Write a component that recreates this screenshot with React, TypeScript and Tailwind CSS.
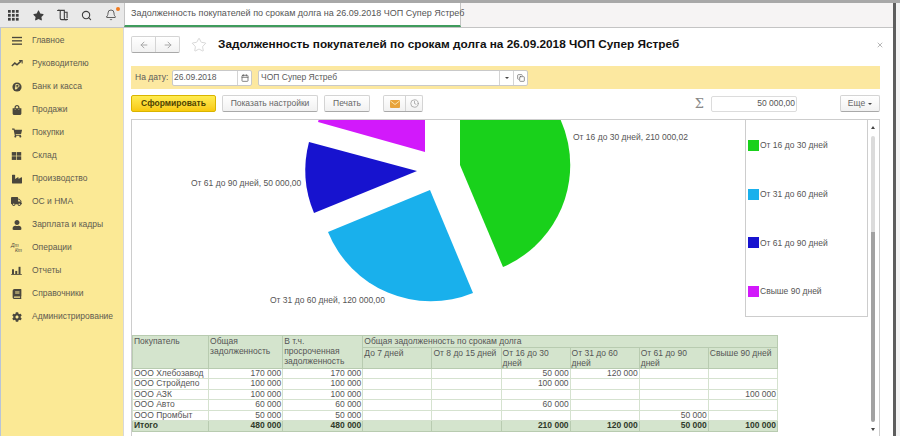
import { ArrowLeft, ArrowRight, Bell, Calendar, Clock, Copy, Search, Star, X } from 'lucide-react';
import { FaBook, FaCog, FaIndustry, FaShoppingBag, FaShoppingCart, FaTruck, FaUser, FaStar } from 'react-icons/fa';
import type { ReactNode } from 'react';

const TITLE = 'Задолженность покупателей по срокам долга на 26.09.2018 ЧОП Супер Ястреб';

const menu: Array<{ label: string; icon: ReactNode }> = [
  {
    label: 'Главное',
    icon: (
      <svg width="12" height="10" viewBox="0 0 14 12" fill="#4a473d">
        <rect x="1" y="1" width="12" height="1.6" />
        <rect x="1" y="5" width="12" height="1.6" />
        <rect x="1" y="9" width="12" height="1.6" />
      </svg>
    ),
  },
  {
    label: 'Руководителю',
    icon: (
      <svg width="12" height="9" viewBox="0 0 14 10" fill="none" stroke="#4a473d" strokeWidth="1.8">
        <path d="M1 8 L4.5 4.5 L7 6.5 L12 2" />
        <path d="M9.5 1.5 H13 V5" strokeWidth="1.2" />
      </svg>
    ),
  },
  {
    label: 'Банк и касса',
    icon: (
      <svg width="10" height="10" viewBox="0 0 12 12">
        <circle cx="6" cy="6" r="5.5" fill="#4a473d" />
        <path d="M4.6 9.2 V3 H6.8 A1.6 1.6 0 0 1 6.8 6.3 H3.5 M3.5 7.8 H6.5" fill="none" stroke="#fbe995" strokeWidth="1.1" />
      </svg>
    ),
  },
  { label: 'Продажи', icon: <FaShoppingBag size={10} color="#4a473d" /> },
  { label: 'Покупки', icon: <FaShoppingCart size={10} color="#4a473d" /> },
  {
    label: 'Склад',
    icon: (
      <svg width="11" height="10" viewBox="0 0 14 12" fill="#4a473d">
        <rect x="1" y="1" width="5.6" height="4.6" />
        <rect x="7.4" y="1" width="5.6" height="4.6" />
        <rect x="1" y="6.4" width="5.6" height="4.6" />
        <rect x="7.4" y="6.4" width="5.6" height="4.6" />
      </svg>
    ),
  },
  { label: 'Производство', icon: <FaIndustry size={10} color="#4a473d" /> },
  { label: 'ОС и НМА', icon: <FaTruck size={11} color="#4a473d" /> },
  { label: 'Зарплата и кадры', icon: <FaUser size={10} color="#4a473d" /> },
  {
    label: 'Операции',
    icon: (
      <span className="relative block h-[10px] w-[11px] text-[5px] italic leading-none text-[#4a473d]">
        <span className="absolute left-0 top-0">Дт</span>
        <span className="absolute bottom-0 right-0">Кт</span>
      </span>
    ),
  },
  {
    label: 'Отчеты',
    icon: (
      <svg width="11" height="9" viewBox="0 0 13 11" fill="#4a473d">
        <rect x="1" y="4" width="2.4" height="6" />
        <rect x="5" y="6" width="2.4" height="4" />
        <rect x="9" y="1" width="2.4" height="9" />
        <rect x="0" y="10" width="13" height="1" />
      </svg>
    ),
  },
  { label: 'Справочники', icon: <FaBook size={10} color="#4a473d" /> },
  { label: 'Администрирование', icon: <FaCog size={10} color="#4a473d" /> },
];

const legend = [
  { label: 'От 16 до 30 дней', color: 'bg-[#19d11b]' },
  { label: 'От 31 до 60 дней', color: 'bg-[#19b0ec]' },
  { label: 'От 61 до 90 дней', color: 'bg-[#1713cf]' },
  { label: 'Свыше 90 дней', color: 'bg-[#d219fb]' },
];

const rows = [
  ['ООО Хлебозавод', '170 000', '170 000', '', '', '50 000', '120 000', '', ''],
  ['ООО Стройдепо', '100 000', '100 000', '', '', '100 000', '', '', ''],
  ['ООО АЗК', '100 000', '100 000', '', '', '', '', '', '100 000'],
  ['ООО Авто', '60 000', '60 000', '', '', '60 000', '', '', ''],
  ['ООО Промбыт', '50 000', '50 000', '', '', '', '', '50 000', ''],
];

const totals = ['Итого', '480 000', '480 000', '', '', '210 000', '120 000', '50 000', '100 000'];
const subHeaders = ['До 7 дней', 'От 8 до 15 дней', 'От 16 до 30 дней', 'От 31 до 60 дней', 'От 61 до 90 дней', 'Свыше 90 дней'];
const colWidths = ['w-[76px]', 'w-[74px]', 'w-[80px]', 'w-[69px]', 'w-[69px]', 'w-[69px]', 'w-[69px]', 'w-[69px]', 'w-[69px]'];

function Btn({ children, className = '' }: { children: ReactNode; className?: string }) {
  return (
    <button className={`flex h-[17px] items-center justify-center rounded-[2px] border border-[#d4d4d4] border-b-[#a9a9a9] bg-gradient-to-b from-white to-[#f1f1f1] text-[8.5px] text-[#666] ${className}`}>
      {children}
    </button>
  );
}

function Caret() {
  return <span className="h-0 w-0 border-x-[2px] border-t-[2px] border-x-transparent border-t-[#444]" />;
}

function Report() {
  return (
    <table className="w-[646px] table-fixed border-collapse text-[8.5px] leading-[10px] text-[#555]">
      <colgroup>
        {colWidths.map((w, i) => (
          <col key={i} className={w} />
        ))}
      </colgroup>
      <thead className="bg-[#d4e4cd]">
        <tr className="h-[12px]">
          <th rowSpan={2} className="border border-[#b8cbb0] px-[1px] text-left align-top font-normal">Покупатель</th>
          <th rowSpan={2} className="border border-[#b8cbb0] px-[1px] text-left align-top font-normal">Общая задолженность</th>
          <th rowSpan={2} className="border border-[#b8cbb0] px-[1px] text-left align-top font-normal">В т.ч. просроченная задолженность</th>
          <th colSpan={6} className="border border-[#b8cbb0] px-[1px] text-left align-top font-normal">Общая задолженность по срокам долга</th>
        </tr>
        <tr className="h-[21px]">
          {subHeaders.map((h) => (
            <th key={h} className="border border-[#b8cbb0] px-[1px] text-left align-top font-normal">{h}</th>
          ))}
        </tr>
      </thead>
      <tbody className="leading-[9.4px]">
        {rows.map((row) => (
          <tr key={row[0]} className="h-[10.4px]">
            {row.map((cell, i) => (
              <td key={i} className={`whitespace-nowrap border border-[#d5e2cf] px-[1px] ${i === 0 ? 'text-left' : 'text-right'}`}>{cell}</td>
            ))}
          </tr>
        ))}
        <tr className="h-[11px] bg-[#d4e4cd] font-bold text-[#2f3a2a]">
          {totals.map((cell, i) => (
            <td key={i} className={`whitespace-nowrap border border-[#b8cbb0] px-[1px] ${i === 0 ? 'text-left' : 'text-right'}`}>{cell}</td>
          ))}
        </tr>
      </tbody>
    </table>
  );
}

export default function App() {
  return (
    <div className="flex h-[436px] w-[900px] flex-col overflow-hidden bg-white font-['Liberation_Sans',Arial,sans-serif]">
      <div className="h-[3px] shrink-0 bg-[#a8a8a8]" />
      <div className="flex min-h-0 flex-1">
        <div className="flex w-[893px] flex-col">
          <header className="flex h-[25px] shrink-0 border-b border-[#c4c4c4] bg-[#f6f4f4]">
            <div className="flex w-[124px] items-center bg-[#e9e9e9] pl-[8px] text-[#3e3e3e]">
              <svg width="11" height="11" viewBox="0 0 12 12" fill="#3e3e3e" className="mr-[14px]">
                {[0, 4.3, 8.6].flatMap((y) =>
                  [0, 4.3, 8.6].map((x) => <rect key={`${x}-${y}`} x={x} y={y} width="3" height="3" />),
                )}
              </svg>
              <FaStar size={11} className="mr-[13px]" />
              <svg width="11" height="12" viewBox="0 0 12 13" fill="none" stroke="#3e3e3e" strokeWidth="1.2" className="mr-[13px]">
                <path d="M1 1.5 H8 V10 A2 2 0 0 0 11 11.5 H5 A1.5 1.5 0 0 1 3.5 10 V3 A1.5 1.5 0 0 0 1 1.5 Z" />
                <path d="M8 3.5 H11 V10" />
              </svg>
              <Search size={11} strokeWidth={2.4} className="mr-[13px]" />
              <span className="relative">
                <Bell size={12} strokeWidth={1.6} />
                <span className="absolute right-[-3px] top-[-2px] h-[4px] w-[4px] rounded-full bg-[#f07a1e]" />
              </span>
            </div>
            <div className="flex w-[337px] items-center justify-between border-x border-[#c4c4c4] border-b-2 border-b-[#3f9c5d] bg-white pl-[6px] pr-[4px] text-[9px] text-[#555]">
              <span className="whitespace-nowrap">{TITLE}</span>
              <X size={8} strokeWidth={2.6} className="text-[#333]" />
            </div>
          </header>

          <div className="flex min-h-0 flex-1">
            <nav className="flex w-[124px] shrink-0 flex-col border-l border-l-[#b8c4d8] border-r border-r-[#d8d8d8] bg-[#fbe995] pt-[1px]">
              {menu.map((item) => (
                <div key={item.label} className="flex h-[23px] shrink-0 items-center text-[8.5px] text-[#5e5b50]">
                  <span className="flex w-[31px] shrink-0 justify-center">{item.icon}</span>
                  <span className="whitespace-nowrap">{item.label}</span>
                </div>
              ))}
            </nav>

            <main className="flex min-w-0 flex-1 flex-col pl-[7px] pr-[13px] pt-[8px]">
              <div className="flex h-[17px] shrink-0 items-center">
                <div className="flex h-[17px] w-[49px] rounded-[2px] border border-[#d4d4d4] border-b-[#a9a9a9] bg-gradient-to-b from-white to-[#f1f1f1] text-[#a8a8a8]">
                  <span className="flex flex-1 items-center justify-center border-r border-[#d4d4d4]"><ArrowLeft size={10} strokeWidth={2.4} /></span>
                  <span className="flex flex-1 items-center justify-center"><ArrowRight size={10} strokeWidth={2.4} /></span>
                </div>
                <Star size={16} strokeWidth={1} className="ml-[11px] text-[#c4c4c4]" />
                <h1 className="ml-[11px] whitespace-nowrap text-[11.8px] font-bold text-[#111]">{TITLE}</h1>
                <X size={8} strokeWidth={1.6} className="ml-auto mr-[-4px] text-[#777]" />
              </div>

              <div className="mt-[13px] flex h-[23px] shrink-0 items-center bg-[#fce8a0] pl-[4px] text-[8.5px] text-[#5a5a5a]">
                <span className="w-[37px] whitespace-nowrap">На дату:</span>
                <div className="flex h-[16px] w-[80px] items-center rounded-[2px] border border-[#c9c9c9] bg-white">
                  <span className="flex-1 pl-[1px]">26.09.2018</span>
                  <span className="flex h-full w-[14px] items-center justify-center border-l border-[#d4d4d4]"><Calendar size={8} strokeWidth={2.2} /></span>
                </div>
                <div className="ml-[6px] flex h-[16px] w-[270px] items-center rounded-[2px] border border-[#c9c9c9] bg-white">
                  <span className="flex-1 pl-[2px]">ЧОП Супер Ястреб</span>
                  <span className="flex h-full w-[14px] items-center justify-center border-l border-[#d4d4d4]"><Caret /></span>
                  <span className="flex h-full w-[14px] items-center justify-center border-l border-[#d4d4d4]"><Copy size={8} /></span>
                </div>
              </div>

              <div className="mt-[6px] flex h-[17px] shrink-0 items-center">
                <button className="flex h-[17px] w-[85px] items-center justify-center rounded-[2px] border border-[#d9b400] bg-gradient-to-b from-[#ffec4f] to-[#f8c90a] text-[8.5px] font-bold text-[#4f4300]">Сформировать</button>
                <Btn className="ml-[6px] w-[96px]">Показать настройки</Btn>
                <Btn className="ml-[6px] w-[46px]">Печать</Btn>
                <div className="ml-[13px] flex h-[17px] w-[40px] rounded-[2px] border border-[#d4d4d4] border-b-[#a9a9a9] bg-gradient-to-b from-white to-[#f1f1f1]">
                  <span className="flex w-[22px] items-center justify-center border-r border-[#d4d4d4]">
                    <svg width="10" height="8" viewBox="0 0 10 8">
                      <rect width="10" height="8" rx="1" fill="#e8a33a" />
                      <path d="M0.5 1 L5 4.5 L9.5 1" fill="none" stroke="#fbe2a8" />
                    </svg>
                  </span>
                  <span className="flex flex-1 items-center justify-center text-[#999]"><Clock size={9} /></span>
                </div>
                <span className="ml-auto mr-[7px] font-['DejaVu_Serif',serif] text-[13px] leading-none text-[#888]">Σ</span>
                <div className="flex h-[16px] w-[86px] items-center justify-end rounded-[2px] border border-[#dcdcdc] pr-[1px] text-[8.5px] text-[#555]">50 000,00</div>
                <Btn className="ml-[43px] w-[40px] gap-[3px]">
                  Еще
                  <Caret />
                </Btn>
              </div>

              <section className="mt-[7px] flex min-h-0 flex-1 border border-b-0 border-[#cdcdcd]">
                <div className="flex min-w-0 flex-1 flex-col">
                  <div className="flex h-[215px] shrink-0">
                    <svg width="613" height="215" viewBox="132 120 613 215" className="block shrink-0">
                      <path d="M460 165 L460 54 A111 111 0 0 1 503 267 Z" fill="#19d11b" />
                      <path d="M430 190 L473 293 A111 111 0 0 1 328 232 Z" fill="#19b0ec" />
                      <path d="M417 171 L314 213 A111 111 0 0 1 309 142 Z" fill="#1713cf" />
                      <path d="M425 152 L318 122 A111 111 0 0 1 425 41 Z" fill="#d219fb" />
                      <g fontSize="8.5" fill="#555">
                        <text x="573" y="140">От 16 до 30 дней, 210 000,02</text>
                        <text x="191" y="186">От 61 до 90 дней, 50 000,00</text>
                        <text x="270" y="303">От 31 до 60 дней, 120 000,00</text>
                      </g>
                    </svg>
                    <aside className="flex h-[197px] w-[123px] shrink-0 flex-col border-x border-b border-[#cdcdcd] pt-[1.5px] pl-[2px] text-[8.5px] text-[#555]">
                      {legend.map((l) => (
                        <div key={l.label} className="flex h-[48.6px] items-center gap-[1px]">
                          <span className={`h-[11px] w-[11px] ${l.color}`} />
                          {l.label}
                        </div>
                      ))}
                    </aside>
                  </div>
                  <Report />
                </div>
                <div className="relative w-[12px] shrink-0">
                  <div className="absolute left-[4px] top-[16px] h-[96px] w-[4px] rounded-t-[2px] bg-[#dbdbdb]" />
                  <div className="absolute left-[4px] top-[112px] h-[190px] w-[4px] rounded-b-[2px] bg-[#a2a2a2]" />
                  <div className="absolute left-[4px] top-[6px] h-0 w-0 border-x-[2px] border-b-[3px] border-x-transparent border-b-[#444]" />
                  <div className="absolute left-[4px] top-[308px] h-0 w-0 border-x-[2px] border-t-[3px] border-x-transparent border-t-[#444]" />
                </div>
              </section>
            </main>
          </div>
        </div>
        <div className="w-[3px] shrink-0 bg-[#5e5e5e]" />
        <div className="w-[4px] shrink-0 bg-[#f4f4f4]" />
      </div>
    </div>
  );
}
